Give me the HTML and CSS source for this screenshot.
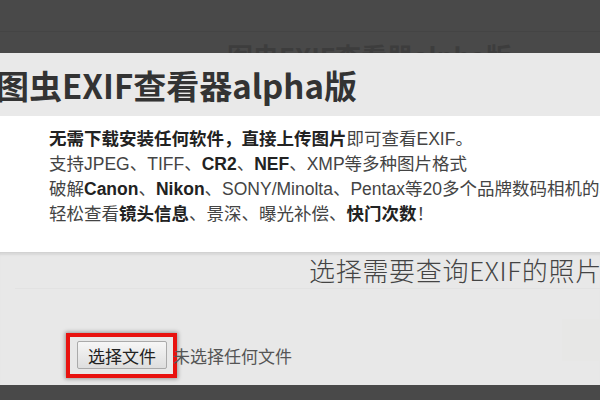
FILE: index.html
```html
<!DOCTYPE html>
<html>
    <head>
        <meta charset="utf-8">
        <link rel="stylesheet" href="styles.css">
    </head>

    <body>
        <header class="backdrop">
            <div class="backdrop-nav"></div>
            <div class="backdrop-row">
                <span class="ghost-small">图虫EXIF查看器alpha版</span>
                <span class="ghost-title">图虫EXIF查看器alpha版</span>
            </div>
        </header>

        <section class="title-bar">
            <h1>图虫EXIF查看器alpha版</h1>
        </section>

        <section class="intro">
            <p><b>无需下载安装任何软件，直接上传图片</b>即可查看EXIF。</p>
            <p>支持JPEG、TIFF、<b>CR2</b>、<b>NEF</b>、XMP等多种图片格式</p>
            <p>破解<b>Canon</b>、<b>Nikon</b>、SONY/Minolta、Pentax等20多个品牌数码相机的私有信息</p>
            <p>轻松查看<b>镜头信息</b>、景深、曝光补偿、<b>快门次数</b>！</p>
        </section>

        <section class="upload">
            <h2>选择需要查询EXIF的照片</h2>
            <div class="upload-row">
                <span class="highlight">
                    <button class="file-btn">选择文件</button>
                </span>
                <span class="file-name">未选择任何文件</span>
            </div>
            <div class="side-box"></div>
        </section>

        <footer class="backdrop-bottom"></footer>
    </body>
</html>
```

FILE: styles.css
```css
html, body {
    margin: 0;
    padding: 0;
    width: 600px;
    height: 400px;
    overflow: hidden;
    background: #494949;
    font-family: "Liberation Sans", "Noto Sans CJK SC", sans-serif;
}

.backdrop {
    height: 53px;
    overflow: hidden;
    background: #494949;
}
.backdrop-nav {
    height: 31px;
    border-bottom: 1px solid #444;
}
.backdrop-row {
    display: flex;
    align-items: flex-start;
    padding-top: 11px;
    font-family: "Noto Sans CJK SC", sans-serif;
    color: #3d3d3d;
}
.ghost-small {
    font-size: 13px;
    margin-left: -6px;
    margin-top: 8px;
    width: 233px;
    white-space: nowrap;
}
.ghost-title {
    font-size: 26px;
    font-weight: bold;
    line-height: 1;
    white-space: nowrap;
}

.title-bar {
    height: 63px;
    background: #e9e9e9;
    overflow: hidden;
}
.title-bar > h1 {
    margin: 0 0 0 -4px;
    font-family: "Noto Sans CJK SC", sans-serif;
    font-size: 33px;
    font-weight: bold;
    line-height: 64px;
    color: #333;
    white-space: nowrap;
}

.intro {
    height: 136px;
    box-sizing: border-box;
    padding: 11px 0 0 49px;
    background: #fff;
    color: #444;
    font-size: 17.5px;
    line-height: 25px;
    white-space: nowrap;
    overflow: hidden;
}
.intro > p {
    margin: 0;
}
.intro b {
    color: #222;
}

.upload {
    position: relative;
    height: 133px;
    box-sizing: border-box;
    background: #e8e8e8;
    border-top: 1px solid #d2d2d2;
    box-shadow: inset 0 3px 2px -1px #d8d8d8;
    overflow: hidden;
}
.upload > h2 {
    margin: 0 0 0 15px;
    padding-left: 294px;
    height: 35px;
    border-bottom: 1px solid #e2e2e2;
    font-family: "Noto Sans CJK SC", sans-serif;
    font-size: 26px;
    font-weight: 300;
    letter-spacing: 0.7px;
    line-height: 33px;
    color: #444;
    white-space: nowrap;
}
.upload-row {
    display: flex;
    align-items: center;
    margin-top: 44px;
    padding-left: 66px;
}
.highlight {
    display: inline-block;
    padding: 4px 6px 5px 7px;
    border: 4px solid #e8120f;
    box-shadow: 0 0 4px 1px rgba(0, 0, 0, 0.35);
}
.file-btn {
    display: block;
    width: 90px;
    height: 28px;
    margin: 0;
    padding: 0;
    border: 1px solid #aaa;
    border-radius: 2px;
    background: linear-gradient(#f6f6f6, #dedede);
    font-family: "Noto Sans CJK SC", sans-serif;
    font-size: 17px;
    color: #222;
}
.file-name {
    margin-left: -4px;
    font-family: "Noto Sans CJK SC", sans-serif;
    font-size: 17px;
    color: #555;
}

.side-box {
    position: absolute;
    left: 562px;
    top: 66px;
    width: 60px;
    height: 42px;
    background: #e7e7e6;
}

.backdrop-bottom {
    height: 15px;
    background: #494949;
}
```
